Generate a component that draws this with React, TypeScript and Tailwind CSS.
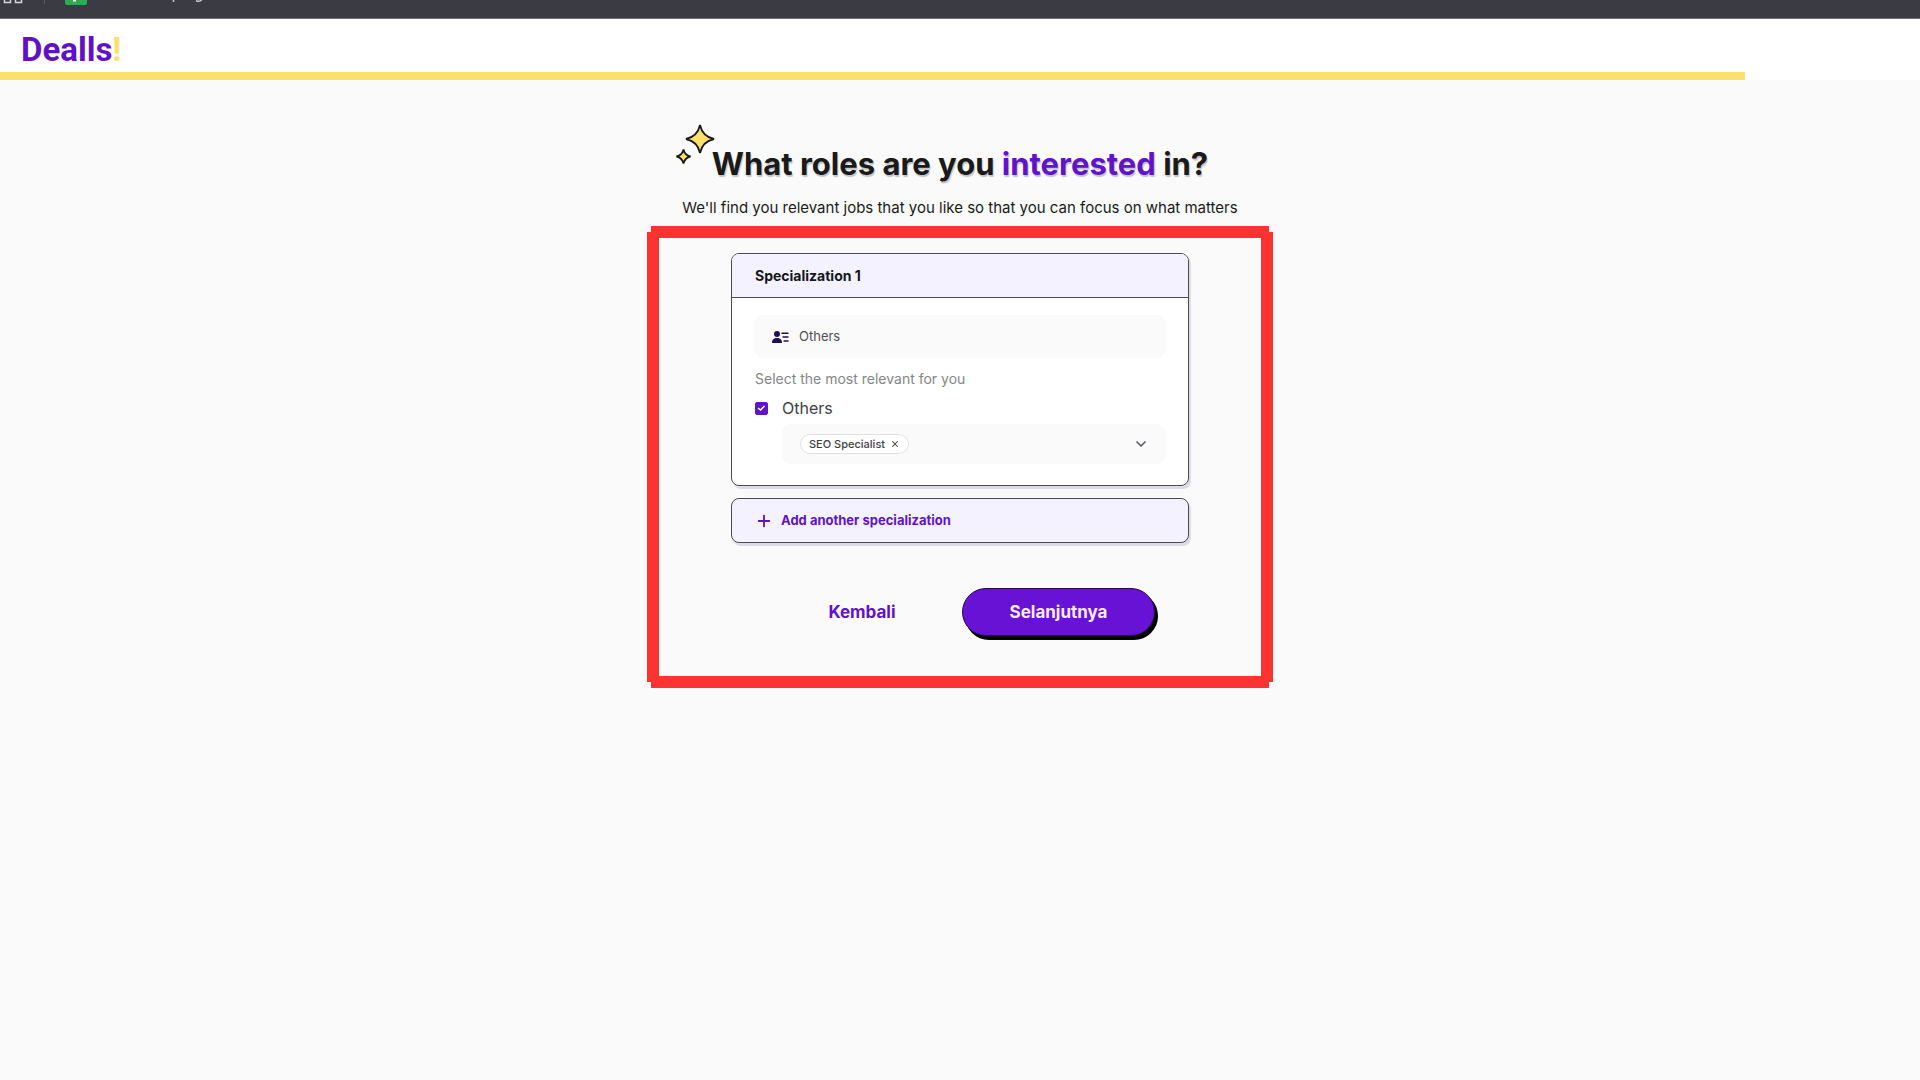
import React, { useState } from 'react';
import { ChevronDown, Plus, X } from 'lucide-react';

const PROGRESS = { value: 10, max: 11 };

const BrowserStrip: React.FC = () => (
  <div className="h-[19px] overflow-hidden border-b border-[#6b6c70] bg-[#3b3c43]" aria-hidden="true">
    <svg className="h-[18px] w-60" viewBox="0 0 240 18" fill="none">
      <path d="M4.5 0v2.5h6V0M15.5 0v2.5h6V0" stroke="#d6d7da" strokeWidth="1.5" />
      <path d="M44.5 0v4" stroke="#5d5e65" />
      <path d="M65 0h22v3a2 2 0 0 1-2 2H67a2 2 0 0 1-2-2z" fill="#34a853" />
      <path d="M74.5 0v1.5" stroke="#ffffff" strokeWidth="3" />
      <path d="M173.5 0v2M196 0.5q3.5 2 6-1" stroke="#c9cacd" strokeWidth="1.5" />
    </svg>
  </div>
);

const Header: React.FC = () => (
  <header className="bg-white">
    <div className="flex h-[53px] items-center px-[21px] pt-2">
      <a href="/" className="font-['Roboto',sans-serif] text-[33px] leading-10 font-bold text-[#5f12c4]">
        Dealls<span className="text-[#fbe06b]">!</span>
      </a>
    </div>
    <div
      className="h-2"
      role="progressbar"
      aria-label="Onboarding progress"
      aria-valuenow={PROGRESS.value}
      aria-valuemax={PROGRESS.max}
    >
      <div className="h-full bg-[#fbe06b]" style={{ width: `${(PROGRESS.value / PROGRESS.max) * 100}%` }} />
    </div>
  </header>
);

const Sparkles: React.FC = () => (
  <svg
    className="absolute right-full bottom-[19px] -mr-[3px] h-[42px] w-10"
    viewBox="0 0 40 42"
    fill="#fbe06b"
    stroke="#1a1a1a"
    strokeWidth="1.8"
    aria-hidden="true"
  >
    <path d="M25 2Q27.5 13.5 39 16Q27.5 18.5 25 30Q22.5 18.5 11 16Q22.5 13.5 25 2Z" />
    <path d="M8.5 26.5Q9.8 32.2 15.5 33.5Q9.8 34.8 8.5 40.5Q7.2 34.8 1.5 33.5Q7.2 32.2 8.5 26.5Z" />
  </svg>
);

const ContactIcon: React.FC = () => (
  <svg className="h-3 w-[18px] shrink-0" viewBox="0 0 18 12" fill="#1f1150" aria-hidden="true">
    <circle cx="6" cy="3" r="3" />
    <path d="M1 12c0-3.5 1.8-5 5-5s5 1.5 5 5z" />
    <path d="M10.5 1.5h7v1.5h-7zM11.5 5.3h6v1.5h-6zM12.5 9.2h5v1.5h-5z" />
  </svg>
);

const HighlightFrame: React.FC = () => (
  <div className="pointer-events-none absolute inset-0" aria-hidden="true">
    <div className="absolute inset-x-1 top-0 h-3 bg-[#fd3232]" />
    <div className="absolute inset-x-1 bottom-0 h-3 bg-[#fd3232]" />
    <div className="absolute inset-y-1.5 left-0 w-3 bg-[#fd3232]" />
    <div className="absolute inset-y-1.5 right-0 w-3 bg-[#fd3232]" />
  </div>
);

const SpecializationCard: React.FC = () => {
  const [checked, setChecked] = useState(true);
  const [roles, setRoles] = useState(['SEO Specialist']);

  return (
    <section className="overflow-hidden rounded-lg border border-[#4b4b55] bg-white shadow-[2px_3px_0_#dcdce2]">
      <h2 className="border-b border-[#4b4b55] bg-[#f4f2ff] px-[23px] py-3 text-sm leading-[19px] font-bold text-[#16161d]">
        Specialization 1
      </h2>
      <div className="px-[23px] pt-[17px] pb-[21px]">
        <label className="flex h-[43px] items-center gap-[10px] rounded-lg bg-[#fafafa] px-4">
          <ContactIcon />
          <input
            className="min-w-0 flex-1 bg-transparent text-[13px] text-[#4f4f57] outline-none"
            aria-label="Specialization"
            defaultValue="Others"
            readOnly
          />
        </label>
        <p className="mt-[11px] text-sm text-[#85858a]">Select the most relevant for you</p>
        <label className="mt-[7px] flex items-center gap-[14px] text-base text-[#3f3f46]">
          <span className="relative flex size-[13px]">
            <input
              type="checkbox"
              className="peer size-[13px] appearance-none rounded-xs border border-[#6013c9] bg-white checked:bg-[#6013c9]"
              checked={checked}
              onChange={(e) => setChecked(e.target.checked)}
            />
            <svg
              className="pointer-events-none absolute inset-0 hidden size-[13px] peer-checked:block"
              viewBox="0 0 13 13"
              fill="none"
              stroke="#ffffff"
              strokeWidth="1.5"
            >
              <path d="M3 6l2.5 2 4-4" />
            </svg>
          </span>
          Others
        </label>
        <div className="relative mt-1 ml-[27px] flex h-10 items-center rounded-lg bg-[#fafafa] pl-[18px]">
          {roles.map((role) => (
            <span
              key={role}
              className="flex h-5 items-center gap-[5px] rounded-full border border-[#e1e1e4] bg-white px-2 text-[11px] font-medium text-[#3f3f46]"
            >
              {role}
              <button
                type="button"
                aria-label={`Remove ${role}`}
                onClick={() => setRoles((all) => all.filter((r) => r !== role))}
              >
                <X className="size-[10px]" strokeWidth={2.5} />
              </button>
            </span>
          ))}
          <select
            className="h-full min-w-0 flex-1 appearance-none bg-transparent outline-none"
            aria-label="Roles"
            value=""
            onChange={(e) => setRoles((all) => [...new Set([...all, e.target.value])])}
          >
            <option value="" />
            <option>SEO Specialist</option>
          </select>
          <ChevronDown
            className="pointer-events-none absolute right-4 size-4 text-[#5b5b60]"
            strokeWidth={2.5}
            aria-hidden="true"
          />
        </div>
      </div>
    </section>
  );
};

export default function App() {
  return (
    <div className="min-h-screen bg-[#fafafa] font-['Inter',sans-serif] text-[#1a1a1a]">
      <BrowserStrip />
      <Header />
      <main className="flex flex-col items-center pt-16">
        <h1 className="relative text-[31px] leading-10 font-bold [text-shadow:1px_2px_1px_#c4c4c8]">
          <Sparkles />
          What roles are you <span className="text-[#6013c9]">interested</span> in?
        </h1>
        <p className="mt-3 text-[15px] leading-6">
          We'll find you relevant jobs that you like so that you can focus on what matters
        </p>
        <div className="relative mt-[6px] w-full max-w-[626px] px-[84px] pt-[27px] pb-[52px]">
          <HighlightFrame />
          <SpecializationCard />
          <button
            type="button"
            className="mt-3 flex w-full items-center gap-2 rounded-lg border border-[#4b4b55] bg-[#f4f2ff] px-[23px] py-3 text-left text-[13px] leading-[19px] font-bold text-[#6013c9] shadow-[2px_3px_0_#dcdce2]"
          >
            <Plus className="size-[18px]" strokeWidth={2.5} aria-hidden="true" />
            Add another specialization
          </button>
          <div className="mt-[45px] flex items-center justify-end pr-[34px] text-[17px] font-bold">
            <button type="button" className="h-12 w-[200px] pt-0.5 text-[#6013c9]">
              Kembali
            </button>
            <button
              type="button"
              className="h-12 w-[193px] rounded-full border border-[#240a52] bg-[#6812d6] pt-0.5 text-[#f8ebff] shadow-[3px_4px_0_#000000]"
            >
              Selanjutnya
            </button>
          </div>
        </div>
      </main>
    </div>
  );
}
